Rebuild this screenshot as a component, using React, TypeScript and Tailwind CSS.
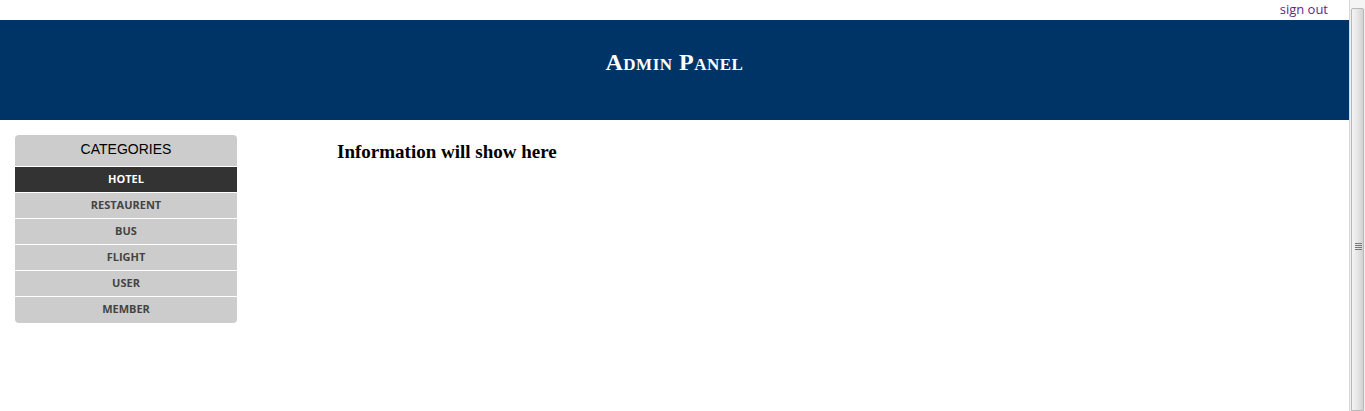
import React from "react";

const items = ["HOTEL", "RESTAURENT", "BUS", "FLIGHT", "USER", "MEMBER"];

export default function App() {
  return (
    <div className="flex h-[411px] w-[1365px] overflow-hidden bg-white">
      <div className="flex-1 min-w-0">
        <div className="flex h-[20px] items-start justify-end pr-[21px] pt-[3px]">
          <a
            href="#"
            className="text-[13px] leading-none text-[#5b2a86]"
            style={{ fontFamily: '"Open Sans", "Liberation Sans", sans-serif' }}
          >
            sign out
          </a>
        </div>
        <div className="flex h-[100px] items-center justify-center bg-[#003366] pb-[17px]">
          <h1
            className="text-[24px] font-bold leading-none tracking-[0.5px] text-white [font-variant:small-caps]"
            style={{ fontFamily: '"Liberation Serif", "Times New Roman", serif' }}
          >
            Admin Panel
          </h1>
        </div>
        <div className="flex pl-[15px] pt-[15px]">
          <div className="w-[222px] overflow-hidden rounded-[4px] bg-[#cccccc] pb-[1px]">
            <div
              className="flex h-[31px] items-center justify-center pb-[3px] text-[14px] text-black"
              style={{ fontFamily: '"Liberation Sans", Arial, sans-serif' }}
            >
              CATEGORIES
            </div>
            {items.map((it, i) => (
              <div
                key={it}
                className={`flex h-[26px] items-center justify-center border-t border-white pb-[1px] text-[11px] font-bold ${
                  i === 0 ? "bg-[#333333] text-white" : "text-[#444444]"
                }`}
                style={{ fontFamily: '"Open Sans", "Liberation Sans", sans-serif' }}
              >
                {it}
              </div>
            ))}
          </div>
          <div className="ml-[100px] pt-[6px]">
            <h2
              className="text-[19px] font-bold leading-[22px] text-black"
              style={{ fontFamily: '"Liberation Serif", "Times New Roman", serif' }}
            >
              Information will show here
            </h2>
          </div>
        </div>
      </div>
      <div className="flex w-[16px] flex-col border-l border-[#d8d8d8] bg-[#f0f0f0]">
        <div className="h-[8px] bg-[#f4f4f4]" />
        <div className="relative mx-[1px] flex-1 rounded-t-[2px] border border-[#b8b8b8] bg-gradient-to-r from-[#f4f4f4] via-[#e6e6e6] to-[#d2d2d2]">
          <div className="absolute left-[3px] top-[234px] flex w-[7px] flex-col gap-[1px]">
            <div className="h-[1px] bg-[#777]" />
            <div className="h-[1px] bg-[#777]" />
            <div className="h-[1px] bg-[#777]" />
            <div className="h-[1px] bg-[#777]" />
          </div>
        </div>
      </div>
    </div>
  );
}
